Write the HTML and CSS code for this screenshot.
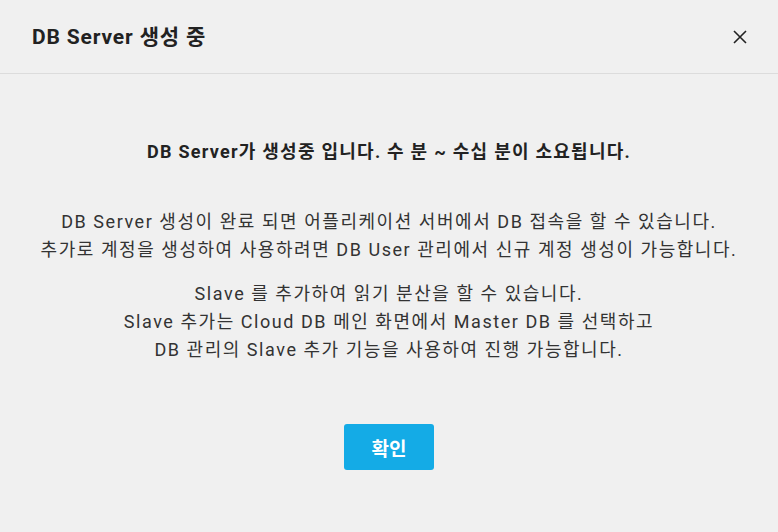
FILE: index.html
```html
<!DOCTYPE html>
<html lang="ko">
<head>
<meta charset="utf-8">
<link rel="stylesheet" href="styles.css">
</head>
<body>
<div class="dialog">
  <header class="head">
    <h1 class="title">DB Server 생성 중</h1>
    <button class="close" aria-label="닫기">
      <svg width="16" height="16" viewBox="0 0 16 16"><path d="M2 2 L14 14 M14 2 L2 14" stroke="#222" stroke-width="1.6" fill="none"/></svg>
    </button>
  </header>
  <main class="body">
    <p class="lead">DB Server가 생성중 입니다. 수 분 ~ 수십 분이 소요됩니다.</p>
    <p class="para">DB Server 생성이 완료 되면 어플리케이션 서버에서 DB 접속을 할 수 있습니다.<br>추가로 계정을 생성하여 사용하려면 DB User 관리에서 신규 계정 생성이 가능합니다.</p>
    <p class="para">Slave 를 추가하여 읽기 분산을 할 수 있습니다.<br>Slave 추가는 Cloud DB 메인 화면에서 Master DB 를 선택하고<br>DB 관리의 Slave 추가 기능을 사용하여 진행 가능합니다.</p>
    <div class="actions"><button class="ok">확인</button></div>
  </main>
</div>
</body>
</html>
```
FILE: styles.css
```css
html, body { margin: 0; padding: 0; }
body {
  background: #f0f0f0;
  font-family: Roboto, "Noto Sans CJK KR", sans-serif;
  color: #222;
  width: 778px;
  height: 532px;
  overflow: hidden;
}
.dialog { display: flex; flex-direction: column; }
.head {
  height: 74px;
  border-bottom: 1px solid #dcdcdc;
  display: flex;
  align-items: center;
  justify-content: space-between;
  padding: 0 30px 0 32px;
  box-sizing: border-box;
}
.title {
  margin: 0;
  font-size: 21px;
  font-weight: 700;
  color: #222;
  margin-top: -4px;
  letter-spacing: 0.85px;
}
.close {
  background: none; border: 0; padding: 0;
  width: 16px; height: 16px; display: flex;
}
.body {
  display: flex; flex-direction: column; align-items: center;
  padding-top: 64px;
  text-align: center;
}
.lead {
  margin: 0 0 42px;
  font-size: 18px; font-weight: 700; line-height: 28px;
  letter-spacing: 1.25px;
}
.para {
  margin: 0 0 16px;
  font-size: 18px; line-height: 28px; color: #333;
  letter-spacing: 1.55px;
}
.actions { margin-top: 44px; }
.ok {
  width: 90px; height: 46px;
  border: 0; border-radius: 3px;
  background: #14abe6; color: #fff;
  font-family: Roboto, "Noto Sans CJK KR", sans-serif;
  font-size: 19px; font-weight: 700;
}
```
